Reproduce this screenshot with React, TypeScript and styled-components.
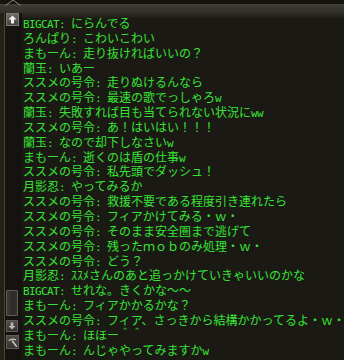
import React from "react";
import styled, { createGlobalStyle } from "styled-components";

const GlobalStyle = createGlobalStyle`
  html, body {
    margin: 0;
    padding: 0;
    background: #1b1914;
  }
`;

type Line = { name: string; text: string };

const lines: Line[] = [
  { name: "BIGCAT", text: "にらんでる" },
  { name: "ろんぱり", text: "こわいこわい" },
  { name: "まもーん", text: "走り抜ければいいの？" },
  { name: "蘭玉", text: "いあー" },
  { name: "ススメの号令", text: "走りぬけるんなら" },
  { name: "ススメの号令", text: "最速の歌でっしゃろw" },
  { name: "蘭玉", text: "失敗すれば目も当てられない状況にww" },
  { name: "ススメの号令", text: "あ！はいはい！！！" },
  { name: "蘭玉", text: "なので却下しなさいw" },
  { name: "まもーん", text: "逝くのは盾の仕事w" },
  { name: "ススメの号令", text: "私先頭でダッシュ！" },
  { name: "月影忍", text: "やってみるか" },
  { name: "ススメの号令", text: "救援不要である程度引き連れたら" },
  { name: "ススメの号令", text: "フィアかけてみる・ｗ・" },
  { name: "ススメの号令", text: "そのまま安全圏まで逃げて" },
  { name: "ススメの号令", text: "残ったｍｏｂのみ処理・ｗ・" },
  { name: "ススメの号令", text: "どう？" },
  { name: "月影忍", text: "ｽｽﾒさんのあと追っかけていきゃいいのかな" },
  { name: "BIGCAT", text: "せれな。きくかな～～" },
  { name: "まもーん", text: "フィアかかるかな？" },
  { name: "ススメの号令", text: "フィア、さっきから結構かかってるよ・ｗ・" },
  { name: "まもーん", text: "ほほー＾＾" },
  { name: "まもーん", text: "んじゃやってみますかw" },
];

// ascii is drawn half width (6px), everything else by the CJK font
const renderRuns = (s: string) =>
  s.split(/([\x20-\x7e]+)/).map((part, i) =>
    /^[\x20-\x7e]+$/.test(part) ? <Half key={i}>{part}</Half> : part
  );

const Frame = styled.div`
  width: 344px;
  height: 360px;
  display: flex;
  flex-direction: column;
  overflow: hidden;
  background: #1b1914;
`;

const TopBar = styled.div`
  height: 13px;
  flex: none;
  display: flex;
  padding-left: 5px;
  background: linear-gradient(
    to bottom,
    #16140f 0,
    #16140f 4px,
    #46443c 4px,
    #3b3932 6px,
    #312f29 13px
  );
`;

const Notch = styled.svg`
  display: block;
  margin-top: -1px;
`;

const Main = styled.div`
  flex: 1;
  display: flex;
  min-height: 0;
`;

const Rail = styled.div`
  width: 22px;
  flex: none;
  box-sizing: border-box;
  display: flex;
  flex-direction: column;
  padding: 0 0 11px 6px;
  background: linear-gradient(
    to right,
    #242118 0,
    #242118 4px,
    #4b4735 4px,
    #4b4735 5px,
    #15130f 5px
  );
`;

const ArrowButton = styled.div<{ $size: number; $dim?: boolean }>`
  width: ${(p) => p.$size}px;
  height: ${(p) => p.$size}px;
  flex: none;
  box-sizing: border-box;
  display: flex;
  align-items: center;
  justify-content: center;
  border: 1px solid ${(p) => (p.$dim ? "#5e5d57" : "#7c7b74")};
  background: linear-gradient(
    to bottom,
    ${(p) => (p.$dim ? "#4e4d48" : "#6c6b65")},
    ${(p) => (p.$dim ? "#34332f" : "#45443f")}
  );
`;

const Spacer = styled.div`
  flex: 1;
`;

const Thumb = styled.div`
  width: 12px;
  height: 26px;
  flex: none;
  box-sizing: border-box;
  margin-bottom: 4px;
  border: 1px solid #5d5b52;
  border-radius: 1px;
  background: linear-gradient(to right, #3d3b35, #2b2a26 60%, #35332e);
`;

const ToolButton = styled(ArrowButton)`
  margin-top: 3px;
  height: 14px;
`;

const Log = styled.div`
  flex: 1;
  padding: 3px 0 0 1px;
  background: linear-gradient(
    to bottom,
    #2d2b25 0,
    #232119 4px,
    #1b1914 6px
  );
`;

const Row = styled.div`
  height: 14.85px;
  line-height: 14.85px;
  white-space: nowrap;
  font-family: "Noto Sans CJK JP", "Noto Sans", sans-serif;
  font-size: 12px;
  color: #36e436;
`;

const Half = styled.span`
  font-family: "DejaVu Sans Mono", "Liberation Mono", monospace;
  font-size: 11px;
  letter-spacing: -0.62px;
`;

export default function App() {
  return (
    <>
      <GlobalStyle />
      <Frame>
        <TopBar>
          <Notch width="16" height="7" viewBox="0 0 16 7">
            <polyline
              points="0.5,6.5 8,1 15.5,6.5"
              fill="none"
              stroke="#8b897c"
              strokeWidth="1"
            />
          </Notch>
        </TopBar>
        <Main>
          <Rail>
            <ArrowButton $size={13}>
              <svg width="9" height="9" viewBox="0 0 9 9">
                <path d="M4.5 0.5 L8.5 4.5 L6 4.5 L6 8.5 L3 8.5 L3 4.5 L0.5 4.5 Z" fill="#f2f2ee" />
              </svg>
            </ArrowButton>
            <Spacer />
            <Thumb />
            <ArrowButton $size={12} $dim>
              <svg width="8" height="8" viewBox="0 0 8 8">
                <path d="M4 7.5 L7.5 4 L5.3 4 L5.3 0.5 L2.7 0.5 L2.7 4 L0.5 4 Z" fill="#b8b7b0" />
              </svg>
            </ArrowButton>
            <ToolButton $size={13} $dim>
              <svg width="11" height="11" viewBox="0 0 11 11">
                <path d="M1 3.5 Q5 0 9.5 2.5 L8.5 3.5 Q5.5 2 3 3.8 Z" fill="#c9c8c0" />
                <path d="M5 3.6 L9.8 9.8" stroke="#c9c8c0" strokeWidth="1.6" />
              </svg>
            </ToolButton>
          </Rail>
          <Log>
            {lines.map((l, i) => (
              <Row key={i}>
                {renderRuns(l.name)}
                <Half>: </Half>
                {renderRuns(l.text)}
              </Row>
            ))}
          </Log>
        </Main>
      </Frame>
    </>
  );
}
